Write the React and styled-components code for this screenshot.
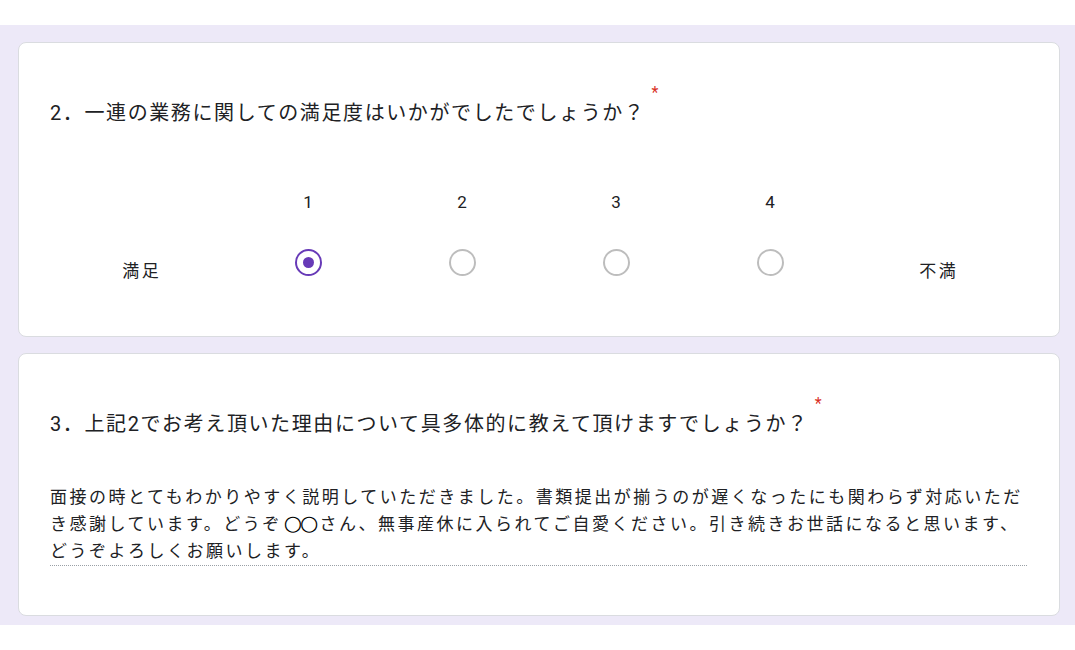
import React from 'react'
import styled, { createGlobalStyle } from 'styled-components'

const GlobalStyle = createGlobalStyle`
    html, body {
        margin: 0;
        padding: 0;
        background: #ffffff;
    }
    body {
        font-family: Roboto, "Noto Sans CJK JP", sans-serif;
        color: #202124;
    }
`

const Page = styled.div`
    padding-top: 25px;
`

const Backdrop = styled.div`
    background-color: #ede9f8;
    padding: 17px 15px 9px 18px;
    display: flex;
    flex-direction: column;
    gap: 16px;
`

const Card = styled.div`
    background: #ffffff;
    border: 1px solid #dadce0;
    border-radius: 8px;
    padding: 55px 31px ${p => p.$bottom}px 31px;
`

const Title = styled.div`
    font-size: 20px;
    letter-spacing: 1.6px;
    line-height: 30px;
    white-space: nowrap;
`

const Required = styled.span`
    position: relative;
    top: -22px;
    color: #d93025;
    font-size: 16px;
    margin-left: 6px;
    letter-spacing: 0;
`

const Scale = styled.div`
    display: grid;
    grid-template-columns: 1fr repeat(4, 154px) 1fr;
    grid-template-rows: 30px auto;
    row-gap: 32px;
    margin-top: 57px;
    justify-items: center;
`

const Num = styled.div`
    font-size: 17px;
    line-height: 30px;
`

const EndLabel = styled.div`
    font-size: 17px;
    letter-spacing: 2.5px;
    padding-left: 2.5px;
    line-height: 24px;
    align-self: start;
    margin-top: 10px;
`

const Radio = styled.div`
    width: 27px;
    height: 27px;
    box-sizing: border-box;
    border-radius: 50%;
    border: 2px solid ${p => (p.$checked ? '#673ab7' : '#bdbdbd')};
    display: flex;
    align-items: center;
    justify-content: center;
    align-self: start;

    &::after {
        content: '';
        width: 11px;
        height: 11px;
        border-radius: 50%;
        background: ${p => (p.$checked ? '#673ab7' : 'transparent')};
    }
`

const Answer = styled.div`
    margin-top: 43px;
    font-size: 17px;
    letter-spacing: 2.5px;
    line-height: 27px;
    border-bottom: 1px dotted #9aa0a6;
    margin-right: 1px;
    white-space: nowrap;
`

const Circles = styled.span`
    font-family: "DejaVu Sans", sans-serif;
    color: #000000;
    font-size: 21px;
    line-height: 1;
    letter-spacing: -2px;
    margin: 0 3px 0 2px;
`

export default function App() {
    return (
        <>
            <GlobalStyle />
            <Page>
                <Backdrop>
                    <Card $bottom={53}>
                        <Title>
                            2．一連の業務に関しての満足度はいかがでしたでしょうか？
                            <Required>*</Required>
                        </Title>
                        <Scale>
                            <div />
                            {[1, 2, 3, 4].map(n => (
                                <Num key={n}>{n}</Num>
                            ))}
                            <div />
                            <EndLabel>満足</EndLabel>
                            {[1, 2, 3, 4].map(n => (
                                <Radio key={n} $checked={n === 1} />
                            ))}
                            <EndLabel>不満</EndLabel>
                        </Scale>
                    </Card>
                    <Card $bottom={49}>
                        <Title>
                            3．上記2でお考え頂いた理由について具多体的に教えて頂けますでしょうか？
                            <Required>*</Required>
                        </Title>
                        <Answer>
                            面接の時とてもわかりやすく説明していただきました。書類提出が揃うのが遅くなったにも関わらず対応いただ
                            <br />
                            き感謝しています。どうぞ<Circles>○○</Circles>さん、無事産休に入られてご自愛ください。引き続きお世話になると思います、
                            <br />
                            どうぞよろしくお願いします。
                        </Answer>
                    </Card>
                </Backdrop>
            </Page>
        </>
    )
}
